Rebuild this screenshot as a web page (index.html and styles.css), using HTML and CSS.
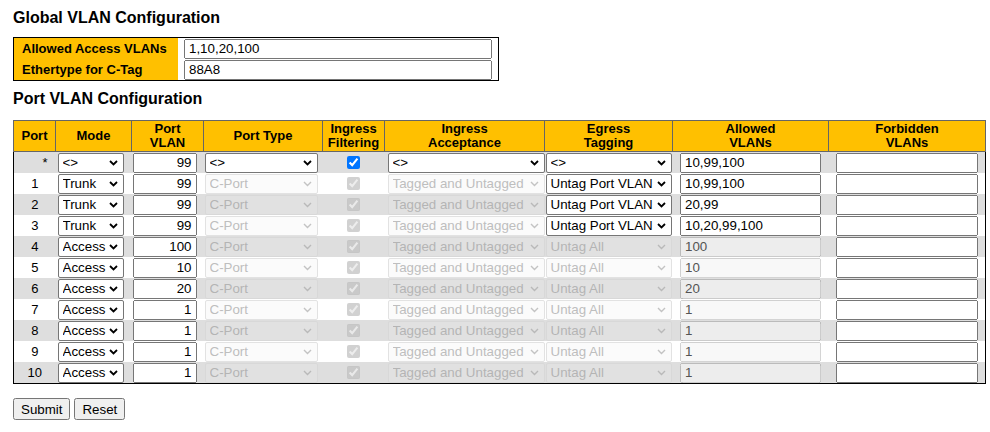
FILE: index.html
```html
<!DOCTYPE html>
<html>
<head>
<meta charset="utf-8">
<title>VLAN Configuration</title>
<link rel="stylesheet" href="styles.css">
</head>
<body>
<h1 class="title">Global VLAN Configuration</h1>
<table class="global">
  <tr>
    <td class="label">Allowed Access VLANs</td>
    <td class="field"><input type="text" class="gtext" value="1,10,20,100"></td>
  </tr>
  <tr>
    <td class="label">Ethertype for C-Tag</td>
    <td class="field"><input type="text" class="gtext" value="88A8"></td>
  </tr>
</table>

<h1 class="title second">Port VLAN Configuration</h1>
<table class="ports">
  <colgroup>
    <col class="c-port"><col class="c-mode"><col class="c-pvid"><col class="c-ptype"><col class="c-filter"><col class="c-accept"><col class="c-egress"><col class="c-allowed"><col class="c-forbid">
  </colgroup>
  <thead>
    <tr>
      <th>Port</th><th>Mode</th><th>Port<br>VLAN</th><th>Port Type</th><th>Ingress<br>Filtering</th><th>Ingress<br>Acceptance</th><th>Egress<br>Tagging</th><th>Allowed<br>VLANs</th><th>Forbidden<br>VLANs</th>
    </tr>
  </thead>
  <tbody>
    <tr class="even">
      <td class="port star">*</td>
      <td><select class="mode"><option>&lt;&gt;</option></select></td>
      <td><input type="text" class="pvid" value="99"></td>
      <td><select class="ptype"><option>&lt;&gt;</option></select></td>
      <td><input type="checkbox" class="chk" checked></td>
      <td><select class="accept"><option>&lt;&gt;</option></select></td>
      <td><select class="egress"><option>&lt;&gt;</option></select></td>
      <td><input type="text" class="allowed" value="10,99,100"></td>
      <td><input type="text" class="forbid" value=""></td>
    </tr>
    <tr class="odd">
      <td class="port">1</td>
      <td><select class="mode"><option>Trunk</option></select></td>
      <td><input type="text" class="pvid" value="99"></td>
      <td><select class="ptype" disabled><option>C-Port</option></select></td>
      <td><input type="checkbox" class="chk" checked disabled></td>
      <td><select class="accept" disabled><option>Tagged and Untagged</option></select></td>
      <td><select class="egress"><option>Untag Port VLAN</option></select></td>
      <td><input type="text" class="allowed" value="10,99,100"></td>
      <td><input type="text" class="forbid" value=""></td>
    </tr>
    <tr class="even">
      <td class="port">2</td>
      <td><select class="mode"><option>Trunk</option></select></td>
      <td><input type="text" class="pvid" value="99"></td>
      <td><select class="ptype" disabled><option>C-Port</option></select></td>
      <td><input type="checkbox" class="chk" checked disabled></td>
      <td><select class="accept" disabled><option>Tagged and Untagged</option></select></td>
      <td><select class="egress"><option>Untag Port VLAN</option></select></td>
      <td><input type="text" class="allowed" value="20,99"></td>
      <td><input type="text" class="forbid" value=""></td>
    </tr>
    <tr class="odd">
      <td class="port">3</td>
      <td><select class="mode"><option>Trunk</option></select></td>
      <td><input type="text" class="pvid" value="99"></td>
      <td><select class="ptype" disabled><option>C-Port</option></select></td>
      <td><input type="checkbox" class="chk" checked disabled></td>
      <td><select class="accept" disabled><option>Tagged and Untagged</option></select></td>
      <td><select class="egress"><option>Untag Port VLAN</option></select></td>
      <td><input type="text" class="allowed" value="10,20,99,100"></td>
      <td><input type="text" class="forbid" value=""></td>
    </tr>
    <tr class="even">
      <td class="port">4</td>
      <td><select class="mode"><option>Access</option></select></td>
      <td><input type="text" class="pvid" value="100"></td>
      <td><select class="ptype" disabled><option>C-Port</option></select></td>
      <td><input type="checkbox" class="chk" checked disabled></td>
      <td><select class="accept" disabled><option>Tagged and Untagged</option></select></td>
      <td><select class="egress" disabled><option>Untag All</option></select></td>
      <td><input type="text" class="allowed" value="100" disabled></td>
      <td><input type="text" class="forbid" value=""></td>
    </tr>
    <tr class="odd">
      <td class="port">5</td>
      <td><select class="mode"><option>Access</option></select></td>
      <td><input type="text" class="pvid" value="10"></td>
      <td><select class="ptype" disabled><option>C-Port</option></select></td>
      <td><input type="checkbox" class="chk" checked disabled></td>
      <td><select class="accept" disabled><option>Tagged and Untagged</option></select></td>
      <td><select class="egress" disabled><option>Untag All</option></select></td>
      <td><input type="text" class="allowed" value="10" disabled></td>
      <td><input type="text" class="forbid" value=""></td>
    </tr>
    <tr class="even">
      <td class="port">6</td>
      <td><select class="mode"><option>Access</option></select></td>
      <td><input type="text" class="pvid" value="20"></td>
      <td><select class="ptype" disabled><option>C-Port</option></select></td>
      <td><input type="checkbox" class="chk" checked disabled></td>
      <td><select class="accept" disabled><option>Tagged and Untagged</option></select></td>
      <td><select class="egress" disabled><option>Untag All</option></select></td>
      <td><input type="text" class="allowed" value="20" disabled></td>
      <td><input type="text" class="forbid" value=""></td>
    </tr>
    <tr class="odd">
      <td class="port">7</td>
      <td><select class="mode"><option>Access</option></select></td>
      <td><input type="text" class="pvid" value="1"></td>
      <td><select class="ptype" disabled><option>C-Port</option></select></td>
      <td><input type="checkbox" class="chk" checked disabled></td>
      <td><select class="accept" disabled><option>Tagged and Untagged</option></select></td>
      <td><select class="egress" disabled><option>Untag All</option></select></td>
      <td><input type="text" class="allowed" value="1" disabled></td>
      <td><input type="text" class="forbid" value=""></td>
    </tr>
    <tr class="even">
      <td class="port">8</td>
      <td><select class="mode"><option>Access</option></select></td>
      <td><input type="text" class="pvid" value="1"></td>
      <td><select class="ptype" disabled><option>C-Port</option></select></td>
      <td><input type="checkbox" class="chk" checked disabled></td>
      <td><select class="accept" disabled><option>Tagged and Untagged</option></select></td>
      <td><select class="egress" disabled><option>Untag All</option></select></td>
      <td><input type="text" class="allowed" value="1" disabled></td>
      <td><input type="text" class="forbid" value=""></td>
    </tr>
    <tr class="odd">
      <td class="port">9</td>
      <td><select class="mode"><option>Access</option></select></td>
      <td><input type="text" class="pvid" value="1"></td>
      <td><select class="ptype" disabled><option>C-Port</option></select></td>
      <td><input type="checkbox" class="chk" checked disabled></td>
      <td><select class="accept" disabled><option>Tagged and Untagged</option></select></td>
      <td><select class="egress" disabled><option>Untag All</option></select></td>
      <td><input type="text" class="allowed" value="1" disabled></td>
      <td><input type="text" class="forbid" value=""></td>
    </tr>
    <tr class="even">
      <td class="port">10</td>
      <td><select class="mode"><option>Access</option></select></td>
      <td><input type="text" class="pvid" value="1"></td>
      <td><select class="ptype" disabled><option>C-Port</option></select></td>
      <td><input type="checkbox" class="chk" checked disabled></td>
      <td><select class="accept" disabled><option>Tagged and Untagged</option></select></td>
      <td><select class="egress" disabled><option>Untag All</option></select></td>
      <td><input type="text" class="allowed" value="1" disabled></td>
      <td><input type="text" class="forbid" value=""></td>
    </tr>
  </tbody>
</table>

<div class="actions">
  <button type="button" class="btn">Submit</button>
  <button type="button" class="btn">Reset</button>
</div>
</body>
</html>
```
FILE: styles.css
```css
body {
  margin: 0;
  padding: 9px 13px 0;
  font-family: "Liberation Sans", Arial, sans-serif;
  font-size: 13px;
  color: #000;
  background: #fff;
}

input, select, button {
  font-family: "Liberation Sans", Arial, sans-serif;
  font-size: 13.333px;
}

.title {
  margin: 0;
  font-size: 16px;
  line-height: 18px;
  font-weight: bold;
}

.title.second {
  margin-top: 9px;
}

/* global settings */
.global {
  margin-top: 10px;
  width: 486px;
  border: 1px solid #000;
  border-collapse: collapse;
}

.global td {
  height: 21px;
  padding: 0;
}

.global .label {
  width: 156px;
  padding-left: 8px;
  background: #ffc000;
  font-weight: bold;
}

.global .field {
  padding-left: 6px;
}

.gtext {
  display: block;
  box-sizing: border-box;
  width: 308px;
  height: 20px;
  margin: 0;
  padding: 0 3px;
}

/* port table */
.ports {
  margin-top: 12px;
  width: 972px;
  table-layout: fixed;
  border: 1px solid #000;
  border-collapse: collapse;
}

.c-port { width: 42px; }
.c-mode { width: 76px; }
.c-pvid { width: 72px; }
.c-ptype { width: 119px; }
.c-filter { width: 62px; }
.c-accept { width: 160px; }
.c-egress { width: 128px; }
.c-allowed { width: 156px; }
.c-forbid { width: 157px; }

.ports th {
  background: #ffc000;
  border: 1px solid #666;
  height: 30px;
  padding: 0 2px;
  font-weight: bold;
  line-height: 14px;
  text-align: center;
}

.ports td {
  height: 21px;
  padding: 0 1px;
}

.ports tr.even td { background: #dedede; }
.ports tr.odd td { background: #fff; }

.ports .port { text-align: center; }
.ports .star { text-align: right; padding-right: 8px; }

.ports input[type="text"] {
  display: block;
  box-sizing: border-box;
  height: 20px;
  margin: 0;
  padding: 0 3px;
}

/* drop-downs with a drawn chevron */
.ports select {
  display: block;
  box-sizing: border-box;
  height: 20px;
  margin: 0;
  padding: 0 16px 0 4px;
  appearance: none;
  -webkit-appearance: none;
  border: 1px solid #767676;
  border-radius: 2px;
  color: #000;
  background: #fff url("data:image/svg+xml,%3Csvg xmlns='http://www.w3.org/2000/svg' width='9' height='6' viewBox='0 0 9 6'%3E%3Cpath d='M1 1l3.5 3.5L8 1' fill='none' stroke='%23000' stroke-width='1.8'/%3E%3C/svg%3E") no-repeat right 5px center;
}

.ports select:disabled {
  color: #a3a3a3;
  border-color: #d6d6d6;
  background-color: rgba(239, 239, 239, 0.3);
  background-image: url("data:image/svg+xml,%3Csvg xmlns='http://www.w3.org/2000/svg' width='9' height='6' viewBox='0 0 9 6'%3E%3Cpath d='M1 1l3.5 3.5L8 1' fill='none' stroke='%23aaa' stroke-width='1.4'/%3E%3C/svg%3E");
}

.mode { width: 66px; margin-left: 1px !important; }
.pvid { width: 64px; text-align: right; }
.ptype { width: 113px; }
.accept { width: 157px; margin-left: 2px !important; }
.egress { width: 126px; }
.allowed { width: 141px; margin: 0 auto !important; }
.forbid { width: 142px; margin: 0 auto !important; }

.chk {
  display: block;
  margin: 0 auto;
  width: 13px;
  height: 13px;
}

.actions {
  margin-top: 14px;
  display: flex;
  gap: 4px;
}

.btn {
  height: 22px;
  padding: 1px 6px;
}
```
